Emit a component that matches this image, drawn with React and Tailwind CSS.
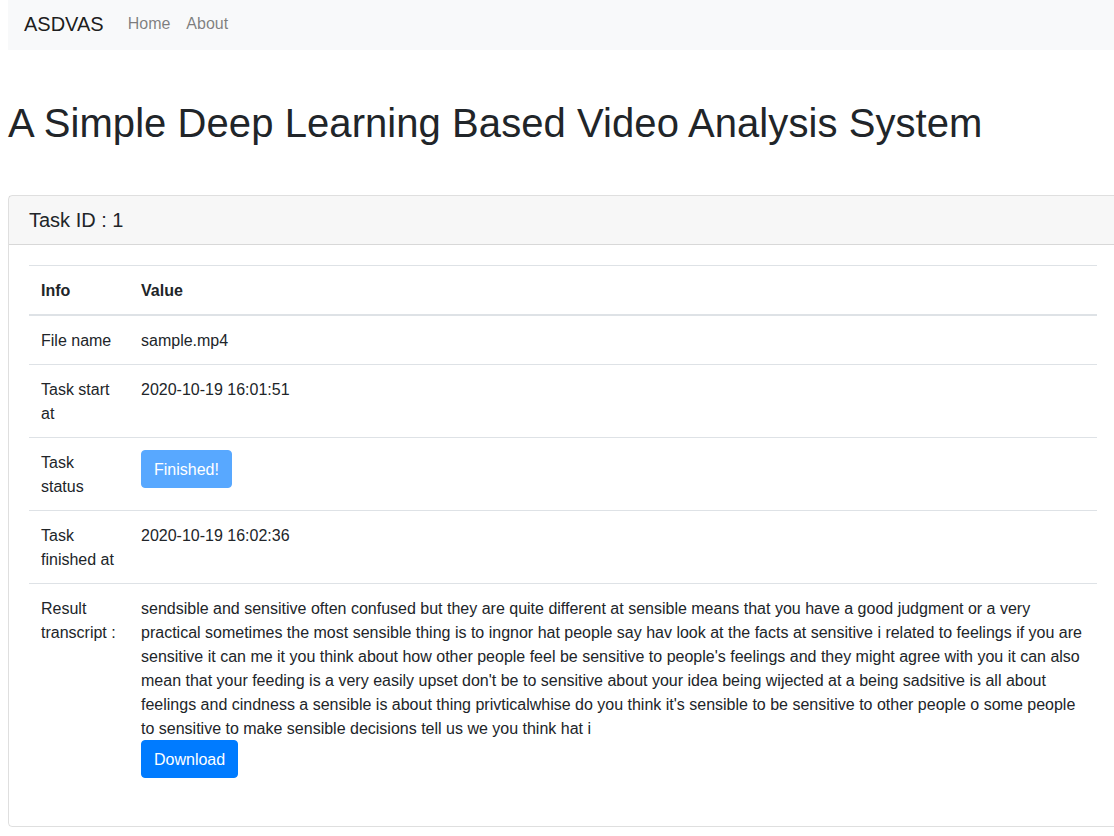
import React from "react";

const transcript =
  "sendsible and sensitive often confused but they are quite different at sensible means that you have a good judgment or a very practical sometimes the most sensible thing is to ingnor hat people say hav look at the facts at sensitive i related to feelings if you are sensitive it can me it you think about how other people feel be sensitive to people's feelings and they might agree with you it can also mean that your feeding is a very easily upset don't be to sensitive about your idea being wijected at a being sadsitive is all about feelings and cindness a sensible is about thing privticalwhise do you think it's sensible to be sensitive to other people o some people to sensitive to make sensible decisions tell us we you think hat i";

function Row({ label, children }) {
  return (
    <tr>
      <td className="w-[100px] border-t border-[#dee2e6] px-3 pt-[13px] pb-[11px] align-top">{label}</td>
      <td className="border-t border-[#dee2e6] px-3 pt-[13px] pb-[11px] align-top">{children}</td>
    </tr>
  );
}

export default function App() {
  return (
    <div
      className="w-[1114px] h-[836px] overflow-hidden bg-white text-[#212529] text-base leading-6"
      style={{ fontFamily: '"Liberation Sans", Arial, sans-serif' }}
    >
      <div className="ml-2 w-[1110px]">
        <nav className="h-[50px] bg-[#f8f9fa] px-4 pt-[9px]">
          <div className="flex h-[30px] items-center">
            <span className="mr-4 text-[20px] leading-[30px] text-[rgba(0,0,0,0.9)]">ASDVAS</span>
            <span className="px-2 text-[rgba(0,0,0,0.5)]">Home</span>
            <span className="px-2 text-[rgba(0,0,0,0.5)]">About</span>
          </div>
        </nav>

        <h1 className="mt-[49px] text-[40px] leading-[48px] font-normal tracking-[0.07px]">
          A Simple Deep Learning Based Video Analysis System
        </h1>

        <div className="mt-[48px] rounded border border-[rgba(0,0,0,0.125)]">
          <div className="border-b border-[rgba(0,0,0,0.125)] bg-[rgba(0,0,0,0.03)] px-5 py-3 text-[20px] leading-6">
            Task ID : 1
          </div>
          <div className="p-5">
            <table className="mb-[17px] w-full border-collapse text-left">
              <thead>
                <tr>
                  <th className="w-[100px] border-t border-b-2 border-[#dee2e6] px-3 pt-[13px] pb-[11px] font-bold">Info</th>
                  <th className="border-t border-b-2 border-[#dee2e6] px-3 pt-[13px] pb-[11px] font-bold">Value</th>
                </tr>
              </thead>
              <tbody>
                <Row label="File name">sample.mp4</Row>
                <Row label="Task start at">2020-10-19 16:01:51</Row>
                <Row label="Task status">
                  <button className="-mt-px rounded border border-[#007bff] bg-[#007bff] px-3 pt-[7px] pb-[5px] leading-6 text-white opacity-[0.65]">
                    Finished!
                  </button>
                </Row>
                <Row label="Task finished at">2020-10-19 16:02:36</Row>
                <Row label="Result transcript :">
                  <div>{transcript}</div>
                  <button className="-mt-px rounded border border-[#007bff] bg-[#007bff] px-3 pt-[7px] pb-[5px] leading-6 text-white">
                    Download
                  </button>
                </Row>
              </tbody>
            </table>
          </div>
        </div>
      </div>
    </div>
  );
}
